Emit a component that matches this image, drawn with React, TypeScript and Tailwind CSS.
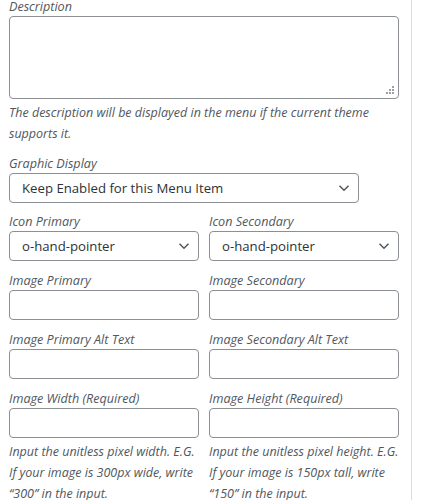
const font = { fontFamily: '"Open Sans", "Liberation Sans", sans-serif' };

function Label({ children }: { children: React.ReactNode }) {
  return <div className="h-[16px] text-[12.6px] leading-[14px] italic text-[#50575e]">{children}</div>;
}

function Chevron() {
  return (
    <svg className="absolute right-[8px] top-1/2 -translate-y-1/2" width="12" height="8" viewBox="0 0 12 8" fill="none">
      <path d="M1.5 1.8 6 6.2 10.5 1.8" stroke="#50575e" strokeWidth="1.5" />
    </svg>
  );
}

function Select({ value, className }: { value: string; className?: string }) {
  return (
    <div className={`relative h-[30px] rounded-[4px] border border-[#8c8f94] bg-white ${className ?? ""}`}>
      <div className="pl-[12px] text-[13.2px] leading-[28px] text-[#2c3338]">{value}</div>
      <Chevron />
    </div>
  );
}

function Input() {
  return <div className="h-[30px] rounded-[4px] border border-[#8c8f94] bg-white" />;
}

function Help({ children }: { children: React.ReactNode }) {
  return <p className="mt-[3px] text-[12.5px] leading-[21px] italic text-[#50575e]">{children}</p>;
}

export default function App() {
  const pairs = [
    ["Image Primary", "Image Secondary"],
    ["Image Primary Alt Text", "Image Secondary Alt Text"],
  ];

  return (
    <div className="flex h-[500px] w-[438px] overflow-hidden bg-white" style={font}>
      <div className="w-[412px] shrink-0 border-r border-[#dcdcde] pl-[9px]">
        <div className="w-[390px]">
          <Label>Description</Label>
          <div className="relative h-[83px] rounded-[4px] border border-[#8c8f94]">
            {/* resize grip */}
            <svg className="absolute bottom-[3px] right-[3px]" width="9" height="9" viewBox="0 0 9 9">
              <rect x="6" y="0" width="2" height="2" fill="#a0a0a0" />
              <rect x="3" y="3" width="2" height="2" fill="#a0a0a0" />
              <rect x="6" y="3" width="2" height="2" fill="#a0a0a0" />
              <rect x="0" y="6" width="2" height="2" fill="#a0a0a0" />
              <rect x="3" y="6" width="2" height="2" fill="#a0a0a0" />
              <rect x="6" y="6" width="2" height="2" fill="#a0a0a0" />
            </svg>
          </div>
          <Help>The description will be displayed in the menu if the current theme supports it.</Help>

          <div className="mt-[13px]">
            <Label>Graphic Display</Label>
            <Select value="Keep Enabled for this Menu Item" className="w-[350px]" />
          </div>

          <div className="mt-[12px] grid grid-cols-2 gap-x-[10px]">
            <div>
              <Label>Icon Primary</Label>
              <Select value="o-hand-pointer" />
            </div>
            <div>
              <Label>Icon Secondary</Label>
              <Select value="o-hand-pointer" />
            </div>
          </div>

          {pairs.map(([a, b]) => (
            <div key={a} className="mt-[13px] grid grid-cols-2 gap-x-[10px]">
              <div>
                <Label>{a}</Label>
                <Input />
              </div>
              <div>
                <Label>{b}</Label>
                <Input />
              </div>
            </div>
          ))}

          <div className="mt-[13px] grid grid-cols-2 gap-x-[10px]">
            <div>
              <Label>Image Width (Required)</Label>
              <Input />
              <Help>Input the unitless pixel width. E.G. If your image is 300px wide, write “300” in the input.</Help>
            </div>
            <div>
              <Label>Image Height (Required)</Label>
              <Input />
              <Help>Input the unitless pixel height. E.G. If your image is 150px tall, write “150” in the input.</Help>
            </div>
          </div>
        </div>
      </div>
    </div>
  );
}
